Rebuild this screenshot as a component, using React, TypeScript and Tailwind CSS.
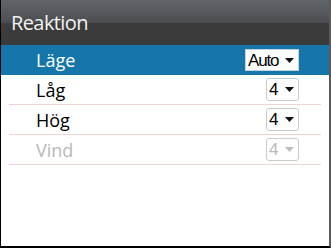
import React from "react";

interface Row {
  label: string;
  value: string;
  disabled?: boolean;
}

const rows: Row[] = [
  { label: "Låg", value: "4" },
  { label: "Hög", value: "4" },
  { label: "Vind", value: "4", disabled: true },
];

// Little down-pointing caret used in the select boxes
const Caret: React.FC<{ color: string }> = ({ color }) => (
  <svg width="9" height="5" viewBox="0 0 9 5" className="block">
    <path d="M0 0h9L4.5 5z" fill={color} />
  </svg>
);

const App: React.FC = () => {
  return (
    <div
      className="w-[331px] h-[248px] flex flex-col bg-white border-l border-l-black border-r-2 border-r-[#5a5a5a] border-b-2 border-b-black overflow-hidden"
      style={{ fontFamily: '"Open Sans", "Noto Sans", sans-serif' }}
    >
      {/* Title bar */}
      <div className="h-[45px] shrink-0 flex items-center pl-[10px] bg-[linear-gradient(to_bottom,#626568_0%,#4c4d50_50%,#3c3c3c_52%,#3a3a3a_100%)]">
        <span className="text-[20px] text-[#f2f2f2] tracking-[-0.6px] leading-none">Reaktion</span>
      </div>

      {/* Selected row */}
      <div className="h-[30px] shrink-0 flex items-center justify-between pl-[35px] pr-[30px] bg-[#1675a9]">
        <span className="text-[18px] text-white leading-none">Läge</span>
        <div
          className="w-[54px] h-[22px] flex items-center justify-between pl-[2px] pr-[4px] bg-white border border-[#c5d3dd]"
          style={{ fontFamily: '"Liberation Sans", Arial, sans-serif' }}
        >
          <span className="text-[17px] text-black tracking-[-1.2px] leading-none">Auto</span>
          <Caret color="#111" />
        </div>
      </div>

      {/* Other rows */}
      <div className="mx-[8px] flex flex-col">
        {rows.map((row) => (
          <div
            key={row.label}
            className="h-[30px] flex items-center justify-between pl-[27px] pr-[22px] border-b border-b-[#f0d4d4]"
          >
            <span
              className={`text-[18px] leading-none ${row.disabled ? "text-[#b8b8b8]" : "text-black"}`}
            >
              {row.label}
            </span>
            <div
              className="w-[33px] h-[23px] flex items-center justify-between pl-[2px] pr-[4px] rounded-[3px] border border-[#cacaca] bg-white"
              style={{ fontFamily: '"Liberation Sans", Arial, sans-serif' }}
            >
              <span
                className={`text-[17px] leading-none ${row.disabled ? "text-[#b8b8b8]" : "text-black"}`}
              >
                {row.value}
              </span>
              <Caret color={row.disabled ? "#bdbdbd" : "#111"} />
            </div>
          </div>
        ))}
      </div>
    </div>
  );
};

export default App;
